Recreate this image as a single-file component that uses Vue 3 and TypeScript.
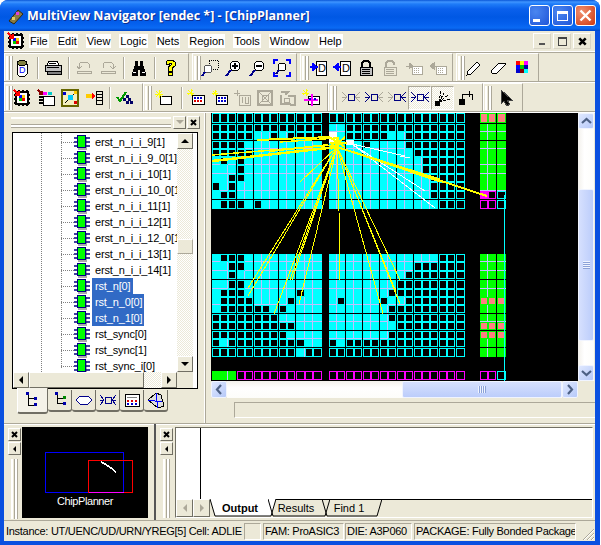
<script setup lang="ts">
interface Cell {
  x: number
  y: number
  w: number
  h: number
  kind: string
  lastCol: boolean
  lastRow: boolean
}

const icons: Record<string, string> = {
  cup: '<path d="M4 5h10v10l-2 2H6l-2-2z" fill="#fff" stroke="#000"/><ellipse cx="9" cy="4" rx="5" ry="2.5" fill="#808040" stroke="#000"/><text x="6" y="14" font-size="9" font-family="Liberation Sans" fill="#00f">D</text>',
  print: '<path d="M5 2h8l2 4H3z" fill="#fff" stroke="#000"/><rect x="1" y="6" width="16" height="6" fill="#c0c0c0" stroke="#000"/><rect x="3" y="12" width="14" height="3" fill="#808080" stroke="#000"/><path d="M3 8h12M5 4h7" stroke="#000"/>',
  undo: '<path d="M4 9V5l2-2h6l2 2v4M2 7l2 3 3-3M2 12h14v2H2z" fill="none" stroke="#aca899"/>',
  redo: '<path d="M4 9V5l2-2h6l2 2v4M11 7l3 3 3-3M2 12h14v2H2z" fill="none" stroke="#aca899"/>',
  bino: '<path d="M5 2h3v5h2V2h3v4l3 8v3h-6v-6H8v6H2v-3l3-8z" fill="#000"/><path d="M3 13h3M12 13h3" stroke="#fff"/>',
  help: '<path d="M5 5V3l2-2h4l3 2v4l-3 2v3H7V8l3-2V4H8v2z" fill="#ffff00" stroke="#000"/><rect x="7" y="13" width="4" height="3" fill="#ffff00" stroke="#000"/>',
  zoomArea: '<path d="M8 1h9v9H8z" fill="none" stroke="#000" stroke-dasharray="1 1"/><circle cx="7" cy="10" r="4" fill="#fff" stroke="#555"/><path d="M1 17l3-4" stroke="#00008b" stroke-width="2"/>',
  zoomIn: '<circle cx="10" cy="7" r="5" fill="#fff" stroke="#000"/><path d="M7 7h6M10 4v6" stroke="#000" stroke-width="1.5"/><path d="M1 17l5-6" stroke="#00008b" stroke-width="2"/>',
  zoomOut: '<circle cx="10" cy="7" r="5" fill="#fff" stroke="#000"/><path d="M7 7h6" stroke="#000" stroke-width="1.5"/><path d="M1 17l5-6" stroke="#00008b" stroke-width="2"/>',
  zoomFit: '<path d="M1 5V1h4M13 1h4v4M17 13v4h-4M5 17H1v-4" fill="none" stroke="#00f" stroke-width="1.5"/><circle cx="9" cy="8" r="4" fill="#fff" stroke="#000"/><path d="M3 15l3-4" stroke="#00008b" stroke-width="2"/>',
  docIn: '<rect x="7" y="2" width="10" height="14" fill="#fff" stroke="#000"/><text x="9" y="13" font-size="11" font-family="Liberation Sans">D</text><path d="M1 8h5M4 5l4 3-4 3z" stroke="#00f" fill="#00f" stroke-width="1.5"/>',
  docOut: '<rect x="7" y="2" width="10" height="14" fill="#fff" stroke="#000"/><text x="9" y="13" font-size="11" font-family="Liberation Sans">D</text><path d="M3 8h5M5 5L1 8l4 3z" stroke="#00f" fill="#00f" stroke-width="1.5"/>',
  lock: '<path d="M5 8V4l2-2h4l2 2v4" fill="none" stroke="#000" stroke-width="1.5"/><rect x="3" y="8" width="12" height="8" fill="#c0c0c0" stroke="#000"/><path d="M5 10h8M5 12h8M5 14h8" stroke="#000"/>',
  lockOff: '<path d="M5 8V4l2-2h4l2 2v2" fill="none" stroke="#aca899" stroke-width="1.5"/><rect x="3" y="8" width="12" height="8" fill="#ece9d8" stroke="#aca899"/><path d="M5 10h8M5 12h8M5 14h8" stroke="#aca899"/>',
  gridIn: '<path d="M1 7h5M4 4l4 3-4 3z" fill="#aca899" stroke="#aca899"/><rect x="7" y="7" width="10" height="8" fill="#fff" stroke="#aca899"/><path d="M9 9h6M9 11h6M9 13h6" stroke="#aca899" stroke-dasharray="1 1"/>',
  gridOut: '<path d="M3 7h5M5 4L1 7l4 3z" fill="#aca899" stroke="#aca899"/><rect x="7" y="7" width="10" height="8" fill="#fff" stroke="#aca899"/><path d="M9 9h6M9 11h6M9 13h6" stroke="#aca899" stroke-dasharray="1 1"/>',
  pencil: '<path d="M2 16l1-4L12 3l3 3-9 9z" fill="#fff" stroke="#000"/><path d="M2 16l3-1" stroke="#000"/>',
  eraser: '<path d="M2 12l8-8h6v2l-8 8H3z" fill="#fff" stroke="#000"/>',
  dots: '<rect x="3" y="2" width="4" height="4" fill="#f00"/><rect x="7" y="2" width="4" height="4" fill="#ff0"/><rect x="11" y="2" width="4" height="4" fill="#f0f"/><rect x="3" y="6" width="4" height="4" fill="#00f"/><rect x="7" y="6" width="4" height="4" fill="#0c0"/><rect x="11" y="6" width="4" height="4" fill="#00a"/><rect x="3" y="10" width="4" height="4" fill="#00c"/><rect x="7" y="10" width="4" height="4" fill="#800"/><rect x="11" y="10" width="4" height="4" fill="#0ff"/>',
  chip: '<path d="M5 1h2v2H5zM9 1h2v2H9zM13 1h2v2h-2zM5 15h2v2H5zM9 15h2v2H9zM13 15h2v2h-2zM1 5h2v2H1zM1 9h2v2H1zM1 13h2v2H1zM15 5h2v2h-2zM15 9h2v2h-2zM15 13h2v2h-2z"/><rect x="3" y="3" width="12" height="12" fill="#fff" stroke="#000" stroke-width="1.5"/><rect x="6" y="6" width="3" height="3" fill="#00f"/><rect x="9" y="6" width="3" height="3" fill="#fc0"/><rect x="6" y="9" width="3" height="3" fill="#0c0"/><rect x="9" y="9" width="3" height="3" fill="#e00"/><path d="M1 1l5 5M2 6h4V2" fill="none" stroke="#f00" stroke-width="2"/>',
  place: '<path d="M1 1l4 4M2 5h3V2" fill="none" stroke="#800" stroke-width="2"/><rect x="6" y="3" width="4" height="3" fill="#f0f"/><rect x="11" y="3" width="4" height="3" fill="#0cc"/><rect x="6" y="7" width="11" height="9" fill="#fff" stroke="#000"/><path d="M2 8h4M2 11h4M2 14h4" stroke="#000" stroke-width="2"/>',
  planner: '<rect x="1" y="1" width="16" height="16" fill="#f4f0c0" stroke="#666600" stroke-width="1.5"/><path d="M4 14L14 4" stroke="#000"/><rect x="7" y="6" width="5" height="5" fill="#0cf"/><rect x="13" y="2" width="3" height="3" fill="#fc0"/><rect x="2" y="3" width="3" height="3" fill="#00c"/><rect x="13" y="12" width="3" height="3" fill="#d00"/>',
  ports: '<path d="M1 7h6" stroke="#fc0" stroke-width="4"/><path d="M7 3l3 4-3 4z" fill="#f00"/><path d="M11 2h6v13h-6zM11 5h6M11 8h6M11 11h6" fill="none" stroke="#000"/>',
  check: '<path d="M1 8l3 4 6-9" fill="none" stroke="#090" stroke-width="2"/><path d="M7 9h3v3H7zM12 9h3v3h-3zM10 6h3v3h-3zM10 12h3v3h-3zM14 12h3v3h-3z" fill="#006"/>',
  newBox: '<rect x="8" y="7" width="11" height="8" fill="#fff" stroke="#000"/><path d="M7 1v8M3 5h8M4 2l6 6M10 2L4 8" stroke="#ff0"/>',
  newGrid: '<rect x="5" y="6" width="12" height="9" fill="#fff" stroke="#000"/><path d="M7 8h2v2H7zM10 8h2v2h-2zM13 8h2v2h-2z" fill="#00c"/><path d="M7 11h2v2H7zM10 11h2v2h-2zM13 11h2v2h-2z" fill="#d00"/><path d="M4 0v7M0 4h7M1 1l5 5M6 1L1 6" stroke="#ff0"/>',
  newGrid2: '<rect x="6" y="6" width="11" height="9" fill="#fff" stroke="#000"/><path d="M8 8h2v2H8zM11 8h2v2h-2zM14 8h2v2h-2zM8 11h2v2H8zM11 11h2v2h-2zM14 11h2v2h-2z" fill="#00c"/><path d="M5 1v6M2 4h6M3 2l4 4M7 2L3 6" stroke="#ff0"/>',
  greyNet: '<rect x="6" y="6" width="11" height="10" fill="#ece9d8" stroke="#aca899"/><path d="M9 8v6M12 8v6h3V8" fill="none" stroke="#aca899"/><path d="M4 1v6M1 4h6" stroke="#aca899"/>',
  greyCross: '<rect x="2" y="2" width="14" height="14" fill="#ece9d8" stroke="#aca899" stroke-width="1.5"/><path d="M2 2l14 14M16 2L2 16" stroke="#aca899"/><rect x="6" y="6" width="6" height="6" fill="none" stroke="#aca899"/>',
  greyMove: '<path d="M2 3h7l-3 3M2 6v9h10M9 7h7v9h-5" fill="none" stroke="#aca899" stroke-width="1.5"/><rect x="5" y="9" width="5" height="4" fill="none" stroke="#aca899"/>',
  magenta: '<rect x="6" y="7" width="11" height="8" fill="#fff" stroke="#000"/><path d="M4 0v7M0 4h7M1 1l5 5M6 1L1 6" stroke="#ff0"/><path d="M2 11h14M10 5v12" stroke="#f0f" stroke-width="1.5"/><path d="M7 9h2v2H7zM12 9h2v2h-2z" fill="#00c"/>',
  conGrey: '<rect x="6" y="5" width="6" height="6" fill="none" stroke="#000080"/><path d="M0 3l5 5-5 5M5 8H0M18 3l-5 5 5 5M13 8h5" fill="none" stroke="#aca899"/>',
  conLeft: '<rect x="6" y="5" width="6" height="6" fill="none" stroke="#000080"/><path d="M0 3l5 5-5 5M5 8H0" fill="none" stroke="#000080"/><path d="M18 3l-5 5 5 5M13 8h5" fill="none" stroke="#aca899"/>',
  conRight: '<rect x="6" y="5" width="6" height="6" fill="none" stroke="#000080"/><path d="M0 3l5 5-5 5M5 8H0" fill="none" stroke="#aca899"/><path d="M18 3l-5 5 5 5M13 8h5" fill="none" stroke="#000080"/>',
  conBoth: '<rect x="6" y="5" width="6" height="6" fill="none" stroke="#000080"/><path d="M0 3l5 5-5 5M5 8H0M18 3l-5 5 5 5M13 8h5" fill="none" stroke="#000080"/>',
  fan: '<rect x="1" y="12" width="5" height="5"/><path d="M5 13L7 2M5 13l5-9M5 13l9-7M5 13l11-3" stroke="#000" stroke-dasharray="3 1"/>',
  corner: '<rect x="2" y="10" width="6" height="6"/><path d="M5 11V5h10v6M12 2v6" fill="none" stroke="#000"/>',
  pointer: '<path d="M4 1v14l3-3 3 5 3-2-3-4h5z" stroke="#444"/>',
  hier: '<path d="M4 2v12h8M4 7h8" fill="none" stroke="#000"/><rect x="2" y="1" width="3" height="3" fill="#00a"/><rect x="10" y="6" width="3" height="3" fill="#00a"/><rect x="10" y="12" width="3" height="3" fill="#00a"/>',
  hierP: '<path d="M6 2v5h8M6 7v5h8" fill="none" stroke="#000"/><rect x="4" y="1" width="3" height="3" fill="#00a"/><rect x="12" y="5" width="3" height="3" fill="#080"/><rect x="12" y="11" width="3" height="3" fill="#00a"/>',
  oval: '<path d="M1 9l4-4h8l4 4-4 4H5z" fill="#fff" stroke="#00008b"/>',
  tabCon: '<rect x="6" y="6" width="6" height="6" fill="none" stroke="#00008b"/><path d="M1 4l4 5-4 5M5 9H1M17 4l-4 5 4 5M13 9h4" fill="none" stroke="#00008b"/>',
  tabGrid: '<rect x="2" y="3" width="14" height="12" fill="#fff" stroke="#000"/><path d="M4 6h10" stroke="#808080"/><path d="M4 9h2v2H4zM8 9h2v2H8zM12 9h2v2h-2z" fill="#d00"/><path d="M4 12h2v2H4zM8 12h2v2H8zM12 12h2v2h-2z" fill="#00c"/>',
  tabCube: '<path d="M1 9l8-7 5 2 3 11-6 2z" fill="#ddd" stroke="#000"/><path d="M1 9l14 2M9 2l2 15" stroke="#00f"/>',
  close: '<path d="M1 1l5 5M6 1L1 6" stroke="#000" stroke-width="2"/>',
}

interface Toolbar {
  tight?: boolean
  lead?: boolean
  items: string[]
  pressed?: string[]
  width: number
}

const toolRows: Toolbar[][] = [
  [
    { width: 185, items: ['cup', 'sep', 'print', 'sep', 'undo', 'redo', 'sep', 'bino', 'sep', 'help'] },
    { width: 105, items: ['zoomArea', 'zoomIn', 'zoomOut', 'zoomFit'] },
    { width: 153, items: ['docIn', 'docOut', 'lock', 'lockOff', 'gridIn', 'gridOut'] },
    { width: 83, items: ['pencil', 'eraser', 'dots'] },
  ],
  [
    { width: 139, items: ['chip', 'place', 'planner', 'ports', 'sep', 'check'] },
    { width: 185, tight: true, items: ['newBox', 'wide', 'newGrid', 'newGrid2', 'greyNet', 'greyCross', 'greyMove', 'magenta'] },
    { width: 155, tight: true, lead: true, items: ['conGrey', 'conLeft', 'conRight', 'conBoth', 'fan', 'corner'], pressed: ['conBoth', 'fan'] },
    { width: 40, lead: true, items: ['pointer'] },
  ],
]

const menus = ['File', 'Edit', 'View', 'Logic', 'Nets', 'Region', 'Tools', 'Window', 'Help']

const nets = [
  'erst_n_i_i_9[1]', 'erst_n_i_i_9_0[1]', 'erst_n_i_i_10[1]', 'erst_n_i_i_10_0[1]', 'erst_n_i_i_11[1]',
  'erst_n_i_i_12[1]', 'erst_n_i_i_12_0[1]', 'erst_n_i_i_13[1]', 'erst_n_i_i_14[1]', 'rst_n[0]',
  'rst_n_0[0]', 'rst_n_1[0]', 'rst_sync[0]', 'rst_sync[1]', 'rst_sync_i[0]',
]
const selected = ['rst_n[0]', 'rst_n_0[0]', 'rst_n_1[0]']

const dockTabs = ['hier', 'hierP', 'oval', 'tabCon', 'tabGrid', 'tabCube']

const bottomTabs = [
  { label: 'Output', w: 58, active: true },
  { label: 'Results', w: 54, active: false },
  { label: 'Find 1', w: 52, active: false },
]

// Splits [start,end] pixel groups into cells, black gap between groups
function axis(groups: [number, number, number][]) {
  const out: { at: number; size: number; last: boolean }[] = []
  for (const [start, end, n] of groups) {
    const pitch = (end - start + 1) / n
    for (let k = 0; k < n; k++) {
      const a = Math.round(start + k * pitch)
      const b = Math.round(start + (k + 1) * pitch)
      out.push({ at: a, size: b - a, last: k === n - 1 })
    }
  }
  return out
}

const colsLeft = axis([[212, 219, 1], [220, 235, 2], [237, 252, 2], [254, 277, 3], [279, 294, 2], [296, 321, 3]])
const colsRight = axis([[329, 344, 2], [346, 361, 2], [363, 378, 2], [380, 395, 2], [397, 412, 2], [414, 437, 3], [439, 454, 2], [456, 464, 1]])
const colsIo = axis([[480, 495, 2], [497, 505, 1]])
const allCols = [...colsLeft, ...colsRight, ...colsIo]

const rowsAxis = axis([
  [114, 123, 1], [125, 140, 2], [142, 157, 2], [158, 182, 3], [183, 199, 2], [201, 209, 1],
  [255, 279, 3], [281, 297, 2], [298, 313, 2], [315, 330, 2], [332, 347, 2], [349, 357, 1],
  [372, 380, 1], [382, 390, 1],
])

const pad = (n: number, c: string) => c.repeat(n)
const fill = (used: number) => pad(used, '.') + pad(16 - used, '#')

const map = [
  pad(13, '#') + pad(16, '#') + 'sss',
  pad(13, '#') + '..' + pad(14, '#') + 'ggg',
  '#####..#.####' + '..#####..' + pad(7, '#') + 'ggg',
  '####.........' + '....#....' + pad(7, '#') + 'ggg',
  '#####........' + fill(10) + 'ggg',
  '.#.#.........' + fill(11) + 'ggg',
  '...#.........' + fill(11) + 'ggg',
  '..##.........' + fill(12) + 'ggg',
  '#.#..........' + fill(12) + 'ggg',
  '.##..........' + fill(12) + 'Mmc',
  '.###.#.......' + fill(13) + 'mmc',
  '.###.........' + fill(13) + 'ggg',
  '..##.........' + fill(10) + 'ggg',
  '..#..........' + fill(9) + 'ggg',
  '..##.........' + fill(8) + 'ggg',
  '.###......#..' + fill(7) + 'ggg',
  '.####....#...' + '.#....#..' + pad(7, '#') + 'sss',
  '.######.#....' + fill(7) + 'ggg',
  '########.....' + fill(7) + 'ggg',
  '##########...' + fill(8) + 'sss',
  '#########....' + fill(7) + 'sss',
  '#.#########..' + '#.' + pad(14, '#') + 'ggg',
  '##########.##' + pad(16, '#') + 'ggg',
  'GGG' + pad(10, 'm') + pad(16, 'm') + 'mmc',
  pad(13, '#') + pad(16, '#') + 'ggg',
]

const cells: Cell[] = []
map.forEach((line, r) => {
  const row = rowsAxis[r]
  if (!row) return
  allCols.forEach((col, c) => {
    cells.push({ x: col.at, y: row.at, w: col.size, h: row.size, kind: line[c], lastCol: col.last, lastRow: row.last })
  })
})

const outerFill: Record<string, string> = { '#': '#00ffff', '.': '#c0c0ff', g: '#c0c0ff', s: '#00ff00', m: '#ff00ff', M: '#ff00ff', c: '#00ffff', G: '#c0c0ff' }
const innerFill: Record<string, string> = { '#': '#000', '.': '#00ffff', g: '#00ff00', s: '#ff8080', m: '#000', M: '#ff00ff', c: '#000', G: '#00ff00' }

function innerRect(cell: Cell) {
  if ('.gG'.includes(cell.kind)) {
    return { x: cell.x, y: cell.y, width: cell.w - (cell.lastCol ? 0 : 1), height: cell.h - (cell.lastRow ? 0 : 1) }
  }
  return { x: cell.x + 1, y: cell.y + 1, width: cell.w - 2, height: cell.h - 2 }
}

// [x1, y1, x2, y2, strokeWidth]
const yellowLines = [
  [330, 138, 257, 141, 2], [337, 139, 280, 143, 1.5], [328, 146, 270, 152, 2], [337, 148, 212, 162, 2.5], [334, 146, 212, 156, 1.5],
  [337, 148, 248, 289, 1], [337, 148, 248, 297, 1], [337, 148, 274, 315, 1], [337, 148, 290, 281, 1], [337, 148, 292, 281, 1],
  [337, 148, 299, 305, 1], [337, 148, 300, 183, 1], [337, 148, 339, 212, 1], [339, 212, 340, 281, 1],
  [337, 148, 383, 315, 1], [337, 148, 400, 305, 1], [337, 148, 396, 293, 1], [337, 148, 400, 281, 1],
  [337, 148, 487, 197, 2], [345, 150, 440, 180, 1], [337, 148, 440, 183, 1],
  [329, 138, 345, 148, 2], [345, 138, 331, 150, 2], [337, 138, 337, 150, 3], [330, 144, 347, 144, 2],
]
const whiteLines = [
  [352, 145, 405, 157], [400, 157, 410, 159], [352, 145, 435, 209], [352, 145, 425, 192],
]
</script>

<template>
  <div class="window">
    <header class="titlebar">
      <svg class="app-icon" width="18" height="18" viewBox="0 0 18 18">
        <path d="M2 14L11 3l5 4-9 10z" fill="#8a7a40" stroke="#302810" />
        <rect x="9" y="5" width="3" height="3" fill="#e040e0" />
        <rect x="5" y="10" width="3" height="3" fill="#e0d060" />
      </svg>
      <span class="title-text">MultiView Navigator [endec *] - [ChipPlanner]</span>
      <div class="caption-btns">
        <button class="cap"><span class="cap-min"></span></button>
        <button class="cap"><span class="cap-max"></span></button>
        <button class="cap cap-close">
          <svg width="13" height="13" viewBox="0 0 13 13"><path d="M1.5 1.5l10 10M11.5 1.5l-10 10" stroke="#fff" stroke-width="2.4" /></svg>
        </button>
      </div>
    </header>

    <div class="client">
      <nav class="menubar">
        <svg class="ico menu-logo" width="18" height="18" viewBox="0 0 18 18" v-html="icons.chip"></svg>
        <span v-for="m in menus" :key="m" class="menu-item"><span>{{ m }}</span></span>
        <div class="mdi-btns">
          <span class="mdi"><i class="mdi-min"></i></span>
          <span class="mdi"><i class="mdi-rest"></i></span>
          <span class="mdi">
            <svg width="9" height="9" viewBox="0 0 7 7" v-html="icons.close"></svg>
          </span>
        </div>
      </nav>

      <div v-for="(row, ri) in toolRows" :key="ri" class="toolrow" :class="{ spaced: ri === 0 }">
        <div
          v-for="(bar, bi) in row"
          :key="bi"
          class="toolbar"
          :class="{ tight: bar.tight, lead: bar.lead }"
          :style="{ width: bar.width + 'px' }"
        >
          <span class="gripper"></span>
          <template v-for="(item, i) in bar.items" :key="i">
            <span v-if="item === 'sep'" class="tool-sep"></span>
            <span v-else-if="item === 'wide'" class="tool-sep wide"></span>
            <span v-else class="tool" :class="{ pressed: bar.pressed?.includes(item) }">
              <svg class="ico" width="18" height="18" viewBox="0 0 18 18" v-html="icons[item]"></svg>
            </span>
          </template>
        </div>
      </div>

      <main class="workspace">
        <aside class="dock">
          <div class="dock-head">
            <span class="dock-grip"></span>
            <span class="mini-btn disabled"><i class="tri-down"></i></span>
            <span class="mini-btn"><svg width="7" height="7" viewBox="0 0 7 7" v-html="icons.close"></svg></span>
          </div>
          <div class="tree-frame">
            <div class="tree-main">
              <div class="tree-list">
                <span class="guide g1"></span>
                <span class="guide g2"></span>
                <div v-for="net in nets" :key="net" class="tree-row">
                  <span class="branch"></span>
                  <svg class="net-ico" width="16" height="16" viewBox="0 0 16 16">
                    <rect x="4" y="3" width="9" height="13" fill="#aaa" />
                    <path d="M0 4h3M0 8h3M0 12h3M12 4h4M12 8h4M12 12h4" stroke="#000080" stroke-width="1.4" />
                    <rect x="3.5" y="1.5" width="8" height="12" fill="#00ff00" stroke="#000080" />
                  </svg>
                  <span class="net-name" :class="{ sel: selected.includes(net) }">{{ net }}</span>
                </div>
              </div>
              <div class="classic-v">
                <span class="classic-btn"><i class="tri-up"></i></span>
                <span class="classic-track">
                  <span class="classic-thumb-v"></span>
                </span>
                <span class="classic-btn"><i class="tri-down dark"></i></span>
              </div>
            </div>
            <div class="classic-h">
              <span class="classic-btn"><i class="tri-left"></i></span>
              <span class="classic-thumb-h"></span>
              <span class="classic-track-h"></span>
              <span class="classic-btn"><i class="tri-right"></i></span>
              <span class="classic-corner"></span>
            </div>
          </div>
          <div class="dock-tabs">
            <span v-for="(t, i) in dockTabs" :key="t" class="dock-tab" :class="{ active: i === 0 }">
              <svg class="ico" width="18" height="18" viewBox="0 0 18 18" v-html="icons[t]"></svg>
            </span>
          </div>
        </aside>

        <section class="view">
          <div class="view-top">
            <svg class="canvas" width="367" height="268" viewBox="211 114 367 268">
              <rect x="211" y="114" width="367" height="268" fill="#000" />
              <g v-for="(cell, i) in cells" :key="i">
                <rect :x="cell.x" :y="cell.y" :width="cell.w" :height="cell.h" :fill="outerFill[cell.kind]" />
                <rect v-bind="innerRect(cell)" :fill="innerFill[cell.kind]" />
              </g>
              <rect x="504" y="196" width="1" height="186" fill="#00ffff" />
              <rect x="329" y="133" width="8" height="11" fill="#fff" />
              <rect x="346" y="141" width="8" height="5" fill="#fff" />
              <line v-for="(l, i) in whiteLines" :key="'w' + i" :x1="l[0]" :y1="l[1]" :x2="l[2]" :y2="l[3]" stroke="#fff" />
              <line v-for="(l, i) in yellowLines" :key="'y' + i" :x1="l[0]" :y1="l[1]" :x2="l[2]" :y2="l[3]" stroke="#ffff00" :stroke-width="l[4]" />
            </svg>
            <div class="xp-v">
              <span class="xp-btn"><svg width="11" height="8" viewBox="0 0 11 8"><path d="M1 6l4.5-4 4.5 4" fill="none" stroke="#4d6185" stroke-width="2.2" /></svg></span>
              <span class="xp-track-v">
                <span class="xp-thumb-v"><i class="thumb-lines-h"></i></span>
              </span>
              <span class="xp-btn"><svg width="11" height="8" viewBox="0 0 11 8"><path d="M1 2l4.5 4 4.5-4" fill="none" stroke="#4d6185" stroke-width="2.2" /></svg></span>
            </div>
          </div>
          <div class="xp-h">
            <span class="xp-btn"><svg width="8" height="11" viewBox="0 0 8 11"><path d="M6 1L2 5.5 6 10" fill="none" stroke="#4d6185" stroke-width="2.2" /></svg></span>
            <span class="xp-track-h">
              <span class="xp-thumb-h"><i class="thumb-lines-v"></i></span>
            </span>
            <span class="xp-btn"><svg width="8" height="11" viewBox="0 0 8 11"><path d="M2 1l4 4.5L2 10" fill="none" stroke="#4d6185" stroke-width="2.2" /></svg></span>
            <span class="xp-corner"></span>
          </div>
          <div class="view-info"></div>
        </section>
      </main>

      <section class="lower">
        <div class="lower-left">
          <div class="side-tools">
            <span class="mini-btn"><svg width="7" height="7" viewBox="0 0 7 7" v-html="icons.close"></svg></span>
            <span class="mini-btn"><i class="tri-left small"></i></span>
            <span class="side-grip"></span>
          </div>
          <div class="overview">
            <svg class="overview-map" width="126" height="72" viewBox="22 427 126 72">
              <rect x="45.5" y="452.5" width="78" height="40" fill="none" stroke="#00f" />
              <rect x="88.5" y="460.5" width="44" height="32" fill="none" stroke="#f00" />
              <path d="M88.5 492.5h35" stroke="#f0f" />
              <path d="M101 462l4 2 6 4 5 4" fill="none" stroke="#fff" stroke-width="1.5" />
            </svg>
            <span class="overview-label">ChipPlanner</span>
          </div>
        </div>
        <div class="lower-right">
          <div class="side-tools">
            <span class="mini-btn"><svg width="7" height="7" viewBox="0 0 7 7" v-html="icons.close"></svg></span>
            <span class="mini-btn"><i class="tri-left small"></i></span>
            <span class="side-grip"></span>
          </div>
          <div class="output">
            <div class="output-text"><span class="output-margin"></span></div>
            <div class="tabstrip">
              <span class="tab-scroll"><i class="tri-left grey"></i></span>
              <span class="tab-scroll"><i class="tri-right grey"></i></span>
              <span v-for="t in bottomTabs" :key="t.label" class="btab" :class="{ active: t.active }" :style="{ width: t.w + 'px' }">
                <svg class="btab-shape" :width="t.w + 8" height="18" :viewBox="`0 0 ${t.w + 8} 18`">
                  <path :d="`M0 0L5 17H${t.w + 3}L${t.w + 8} 0`" :fill="t.active ? '#fff' : 'none'" stroke="#000" />
                </svg>
                <span class="btab-label">{{ t.label }}</span>
              </span>
            </div>
          </div>
        </div>
      </section>

      <footer class="statusbar">
        <span class="pane p-inst">Instance: UT/UENC/UD/URN/YREG[5] Cell: ADLIE</span>
        <span class="pane p-empty"></span>
        <span class="pane p-fam">FAM: ProASIC3</span>
        <span class="pane p-die">DIE: A3P060</span>
        <span class="pane p-pkg">PACKAGE: Fully Bonded Package</span>
        <svg class="size-grip" width="14" height="14" viewBox="0 0 14 14">
          <path d="M13 2L2 13M13 6l-7 7M13 10l-3 3" stroke="#aca899" />
          <path d="M13 3L3 13M13 7l-6 6M13 11l-2 2" stroke="#fff" />
        </svg>
      </footer>
    </div>
  </div>
</template>

<style>
html, body { margin: 0; background: #fff; }
</style>

<style scoped>
.window {
  width: 600px;
  height: 545px;
  display: flex;
  flex-direction: column;
  background: #0a50e0;
  border-radius: 8px 8px 0 0;
  overflow: hidden;
  font-family: "Liberation Sans", Arial, sans-serif;
  font-size: 11px;
  color: #000;
}

.titlebar {
  height: 31px;
  flex: none;
  display: flex;
  align-items: center;
  padding: 0 4px 0 7px;
  background: linear-gradient(180deg, #0a57d8 0, #3f95ff 2px, #1f7cf8 4px, #0a60ec 9px, #0058e4 17px, #0560ee 24px, #0a6af4 28px, #0046c8 31px);
}
.app-icon { margin-right: 2px; }
.title-text {
  color: #fff;
  font-family: "Open Sans", sans-serif;
  font-weight: 700;
  font-size: 12.5px;
  text-shadow: 1px 1px 0 #0f2f90;
  white-space: nowrap;
}
.caption-btns { margin-left: auto; display: flex; gap: 2px; }
.cap {
  width: 21px;
  height: 21px;
  padding: 0;
  border: 1px solid #fff;
  border-radius: 3px;
  background: radial-gradient(circle at 30% 30%, #4a86f0, #1f55d8);
  display: flex;
  align-items: center;
  justify-content: center;
  position: relative;
}
.cap-close { background: radial-gradient(circle at 30% 30%, #f09070, #d03810); }
.cap-min { width: 7px; height: 3px; background: #fff; margin: 9px 6px 0 0; }
.cap-max { width: 11px; height: 10px; border: 1px solid #fff; border-top-width: 3px; box-sizing: border-box; }

.client {
  flex: 1;
  margin: 0 5px 4px 4px;
  background: #ece9d8;
  display: flex;
  flex-direction: column;
  min-height: 0;
}

.menubar {
  height: 21px;
  flex: none;
  display: flex;
  align-items: center;
  padding-left: 3px;
  box-sizing: border-box;
  border-bottom: 1px solid #fff;
  box-shadow: 0 1px 0 #aca899;
}
.menu-logo { margin-right: 1px; }
.menu-item { padding: 0 5px 0 3px; }
.menu-item span {
  background: #fff;
  display: inline-block;
  line-height: 14px;
  font-size: 11px;
  padding: 0 1px;
}
.mdi-btns { margin-left: auto; margin-right: 4px; display: flex; gap: 2px; }
.mdi {
  width: 16px;
  height: 14px;
  display: flex;
  align-items: center;
  justify-content: center;
  background: #ece9d8;
  border: 1px solid #fff;
  border-right-color: #d8d4c4;
  border-bottom-color: #d8d4c4;
}
.mdi-min { width: 6px; height: 2px; background: #555; margin-top: 6px; }
.mdi-rest { width: 7px; height: 6px; border: 1px solid #444; border-top-width: 2px; }

.toolrow {
  height: 30px;
  flex: none;
  display: flex;
  box-sizing: border-box;
  padding-top: 1px;
  border-bottom: 1px solid #aca899;
  box-shadow: 0 1px 0 #fff;
  position: relative;
}
.toolrow.spaced .toolbar { margin-right: 3px; }
.toolbar {
  height: 28px;
  box-sizing: border-box;
  display: flex;
  align-items: center;
  flex: none;
  padding-left: 1px;
  border-top: 1px solid #fff;
  border-left: 1px solid #fff;
  border-right: 1px solid #aca899;
}
.gripper {
  width: 6px;
  height: 24px;
  flex: none;
  margin-right: -2px;
  border-left: 2px solid #fff;
  border-right: 2px solid #fff;
  box-shadow: -1px 0 0 #aca899 inset, 1px 0 0 #aca899;
  background: #ece9d8;
  box-sizing: border-box;
}
.toolbar.lead .gripper { margin-right: 3px; }
.tool {
  width: 24px;
  height: 24px;
  flex: none;
  display: flex;
  align-items: center;
  justify-content: center;
  box-sizing: border-box;
}
.tight .tool { width: 23px; }
.tool.pressed {
  background: repeating-conic-gradient(#fff 0 25%, #ece9d8 0 50%) 0 0 / 2px 2px;
  border: 1px solid #fff;
  border-top-color: #aca899;
  border-left-color: #aca899;
}
.tool-sep {
  width: 7px;
  flex: none;
  height: 22px;
  position: relative;
}
.tool-sep::after {
  content: "";
  position: absolute;
  left: 3px;
  top: 0;
  bottom: 0;
  width: 1px;
  background: #aca899;
  box-shadow: 1px 0 0 #fff;
}
.tool-sep.wide { width: 12px; }
.tool-sep.wide::after { left: 9px; }
.ico { shape-rendering: crispEdges; display: block; overflow: visible; flex: none; }

.workspace {
  flex: none;
  height: 311px;
  display: flex;
}

.dock {
  width: 202px;
  flex: none;
  box-sizing: border-box;
  padding-left: 8px;
  border-right: 1px solid #aca899;
  box-shadow: inset -1px 0 0 #fff;
}
.dock-head {
  height: 20px;
  display: flex;
  align-items: center;
  margin-left: -1px;
  margin-right: 5px;
  box-sizing: border-box;
}
.dock-grip {
  flex: 1;
  height: 6px;
  border-top: 2px solid #fff;
  border-bottom: 2px solid #fff;
  box-shadow: 0 1px 0 #aca899, inset 0 -1px 0 #aca899;
  margin-right: 1px;
}
.mini-btn {
  width: 11px;
  height: 11px;
  flex: none;
  display: flex;
  align-items: center;
  justify-content: center;
  background: #ece9d8;
  border: 1px solid;
  border-color: #fff #716f64 #716f64 #fff;
  margin-left: 1px;
}
.mini-btn.disabled i { border-top-color: #aca899; }
.tri-down, .tri-up, .tri-left, .tri-right { display: block; width: 0; height: 0; border: 4px solid transparent; }
.tri-down { border-top-color: #000; border-bottom: 0; }
.tri-up { border-bottom-color: #000; border-top: 0; }
.tri-left { border-right-color: #000; border-left: 0; }
.tri-right { border-left-color: #000; border-right: 0; }
.tri-left.small { border-width: 3px; border-left: 0; }
.tri-left.grey { border-right-color: #aca899; }
.tri-right.grey { border-left-color: #aca899; }

.tree-frame {
  width: 186px;
  height: 257px;
  box-sizing: border-box;
  border: 1px solid #000;
  background: #fff;
  padding-right: 4px;
  display: flex;
  flex-direction: column;
}
.tree-main { flex: 1; display: flex; min-height: 0; }
.tree-list {
  flex: 1;
  position: relative;
  overflow: hidden;
  padding-top: 1px;
  min-width: 0;
}
.guide {
  position: absolute;
  top: 0;
  bottom: 0;
  width: 0;
  border-left: 1px dotted #808080;
}
.g1 { left: 28px; }
.g2 { left: 48px; bottom: 4px; }
.tree-row {
  height: 16px;
  display: flex;
  align-items: center;
  padding-left: 48px;
  white-space: nowrap;
}
.branch { width: 13px; flex: none; border-top: 1px dotted #808080; }
.net-ico { flex: none; margin-right: 2px; }
.net-name {
  padding: 0 2px 0 3px;
  line-height: 16px;
  font-size: 11px;
  letter-spacing: -0.15px;
  color: #000;
}
.net-name.sel { background: #316ac5; color: #fff; }

.classic-v { width: 16px; flex: none; display: flex; flex-direction: column; }
.classic-btn {
  width: 16px;
  height: 16px;
  flex: none;
  box-sizing: border-box;
  background: #ece9d8;
  border: 1px solid;
  border-color: #fff #716f64 #716f64 #fff;
  display: flex;
  align-items: center;
  justify-content: center;
}
.classic-track {
  flex: 1;
  background: repeating-conic-gradient(#fff 0 25%, #ece9d8 0 50%) 0 0 / 2px 2px;
  padding-top: 90px;
}
.classic-thumb-v {
  display: block;
  height: 15px;
  background: #ece9d8;
  box-sizing: border-box;
  border: 1px solid;
  border-color: #fff #aca899 #aca899 #fff;
}
.classic-h { height: 16px; flex: none; display: flex; }
.classic-thumb-h {
  width: 115px;
  background: #ece9d8;
  box-sizing: border-box;
  border: 1px solid;
  border-color: #fff #716f64 #716f64 #fff;
}
.classic-track-h {
  flex: 1;
  background: repeating-conic-gradient(#fff 0 25%, #ece9d8 0 50%) 0 0 / 2px 2px;
}
.classic-corner { width: 16px; background: #ece9d8; }

.dock-tabs { display: flex; padding-left: 5px; height: 26px; align-items: flex-start; }
.dock-tab {
  width: 24px;
  height: 22px;
  box-sizing: border-box;
  display: flex;
  align-items: center;
  justify-content: center;
  border-right: 1px solid #716f64;
  border-bottom: 2px solid #716f64;
  border-radius: 0 0 3px 3px;
  margin-top: 1px;
}
.dock-tab.active {
  width: 31px;
  height: 26px;
  margin-top: -1px;
  background: #f4f2e8;
  border-left: 1px solid #fff;
  border-bottom: 2px solid #716f64;
}

.view { flex: 1; min-width: 0; padding-left: 5px; padding-top: 1px; }
.view-top { display: flex; height: 268px; }
.canvas { display: block; flex: none; shape-rendering: crispEdges; }

.xp-v { width: 16px; flex: none; display: flex; flex-direction: column; background: linear-gradient(90deg, #f3f1ec, #fff 40%, #fdfdfa); }
.xp-btn {
  width: 16px;
  height: 16px;
  flex: none;
  box-sizing: border-box;
  border: 1px solid #f0f4ff;
  border-radius: 2px;
  background: linear-gradient(135deg, #dfe8ff, #b6c9f9);
  display: flex;
  align-items: center;
  justify-content: center;
}
.xp-track-v { flex: 1; padding-top: 60px; padding-bottom: 24px; display: flex; }
.xp-thumb-v {
  flex: 1;
  box-sizing: border-box;
  border: 1px solid #f0f4ff;
  border-radius: 2px;
  background: linear-gradient(90deg, #d6e0fe, #bccdfb);
  display: flex;
  align-items: center;
  justify-content: center;
}
.thumb-lines-h {
  width: 7px;
  height: 8px;
  background: repeating-linear-gradient(180deg, #f0f4ff 0 1px, #8ca2d8 1px 2px);
}
.thumb-lines-v {
  width: 8px;
  height: 7px;
  background: repeating-linear-gradient(90deg, #f0f4ff 0 1px, #8ca2d8 1px 2px);
}
.xp-h { display: flex; height: 17px; }
.xp-track-h {
  flex: 1;
  display: flex;
  padding-left: 175px;
  background: linear-gradient(180deg, #f3f1ec, #fff 40%, #fdfdfa);
}
.xp-thumb-h {
  flex: 1;
  box-sizing: border-box;
  border: 1px solid #f0f4ff;
  border-radius: 2px;
  background: linear-gradient(180deg, #d6e0fe, #bccdfb);
  display: flex;
  align-items: center;
  justify-content: center;
}
.xp-corner { width: 17px; flex: none; background: #ece9d8; }
.xp-h .xp-btn { height: 17px; }
.view-info {
  margin: 4px 0 0 23px;
  height: 16px;
  box-sizing: border-box;
  border-top: 1px solid #aca899;
  border-left: 1px solid #aca899;
  border-bottom: 1px solid #fff;
}

.lower {
  flex: none;
  height: 98px;
  display: flex;
  border-top: 1px solid #aca899;
  box-shadow: inset 0 1px 0 #fff;
  box-sizing: border-box;
  border-bottom: 1px solid #aca899;
}
.lower-left {
  width: 152px;
  flex: none;
  box-sizing: border-box;
  display: flex;
  padding: 3px 0 0 4px;
  border-right: 2px solid #555;
}
.side-tools {
  width: 12px;
  flex: none;
  display: flex;
  flex-direction: column;
  align-items: center;
  gap: 1px;
  padding-top: 1px;
}
.side-tools .mini-btn { margin-left: 0; }
.side-grip {
  margin-top: 3px;
  width: 6px;
  height: 60px;
  box-sizing: border-box;
  border-left: 2px solid #fff;
  border-right: 2px solid #fff;
  box-shadow: 1px 0 0 #aca899, inset -1px 0 0 #aca899;
}
.overview {
  width: 126px;
  height: 91px;
  margin-left: 2px;
  background: #000;
  color: #fff;
  display: flex;
  flex-direction: column;
  align-items: center;
}
.overview-map { display: block; shape-rendering: crispEdges; }
.overview-label { font-size: 11px; letter-spacing: -0.4px; margin-top: -5px; line-height: 14px; }
.lower-right {
  flex: 1;
  min-width: 0;
  display: flex;
  padding: 3px 2px 2px 4px;
}
.output {
  flex: 1;
  min-width: 0;
  margin-left: 3px;
  border: 1px solid #716f64;
  border-right-color: #fff;
  border-bottom-color: #fff;
  background: #fff;
  display: flex;
  flex-direction: column;
}
.output-text { flex: 1; min-height: 0; display: flex; }
.output-margin { width: 24px; border-right: 1px solid #000; }
.tabstrip {
  height: 18px;
  flex: none;
  display: flex;
  background: #ece9d8;
  position: relative;
}
.tabstrip::before {
  content: "";
  position: absolute;
  left: 35px;
  right: 0;
  top: 0;
  border-top: 1px solid #000;
}
.tab-scroll {
  width: 17px;
  box-sizing: border-box;
  border: 1px solid;
  border-color: #fff #716f64 #716f64 #fff;
  display: flex;
  align-items: center;
  justify-content: center;
  flex: none;
}
.btab {
  position: relative;
  flex: none;
  display: flex;
  justify-content: center;
  align-items: center;
}
.btab-shape { position: absolute; left: 0; top: 0; }
.btab-label { position: relative; padding-left: 2px; font-size: 11px; }
.btab.active .btab-label { font-weight: 700; }

.statusbar {
  flex: 1;
  min-height: 0;
  display: flex;
  align-items: flex-end;
  padding: 0 0 1px 1px;
  gap: 1px;
  position: relative;
}
.pane {
  height: 17px;
  box-sizing: border-box;
  line-height: 15px;
  padding-left: 1px;
  border: 1px solid;
  border-color: #aca899 #fff #fff #aca899;
  white-space: nowrap;
  overflow: hidden;
  font-size: 11px;
  letter-spacing: -0.28px;
  flex: none;
}
.p-inst { width: 238px; border: 0; line-height: 17px; }
.p-empty { width: 17px; }
.p-fam { width: 81px; margin-left: 1px; }
.p-die { width: 67px; }
.p-pkg { width: 162px; margin-left: 1px; }
.size-grip { position: absolute; right: 0; bottom: 0; }
</style>
